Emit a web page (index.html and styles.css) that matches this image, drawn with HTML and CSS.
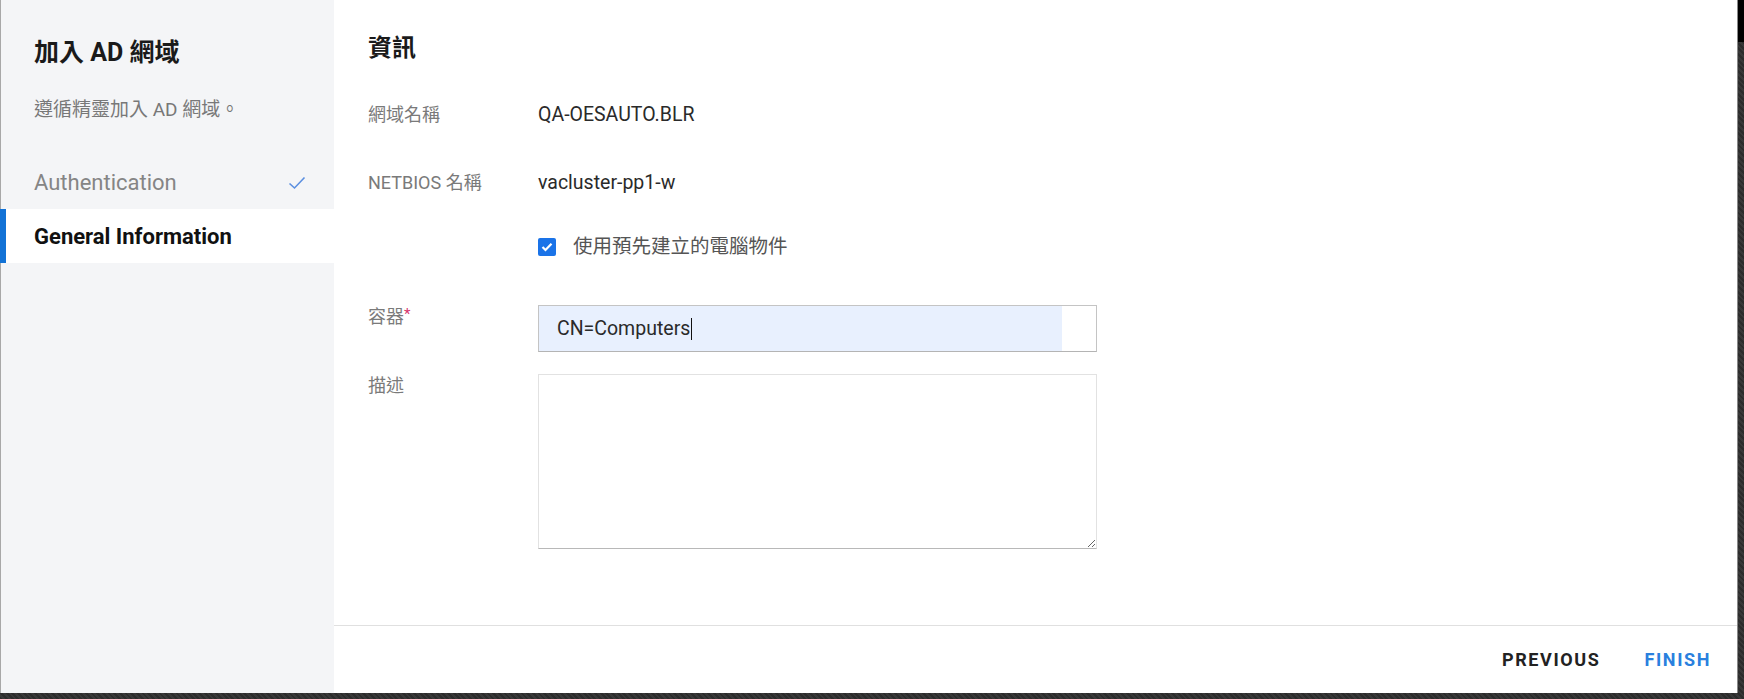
FILE: index.html
```html
<!DOCTYPE html>
<html>
<head>
  <link rel="stylesheet" href="styles.css">
</head>
<body>
  <div class="page">
    <div class="dialog">
      <div class="sidebar">
        <h1 class="wizard-title">加入 AD 網域</h1>
        <p class="wizard-desc">遵循精靈加入 AD 網域。</p>
        <div class="steps">
          <div class="step done">
            <span>Authentication</span>
            <svg class="step-check" width="18" height="14" viewBox="0 0 18 14">
              <path d="M1.5 7.5 L6.5 12 L16.5 1.5" fill="none" stroke="#5b8fe0" stroke-width="1.6"/>
            </svg>
          </div>
          <div class="step active">
            <span>General Information</span>
          </div>
        </div>
      </div>
      <div class="main">
        <div class="content">
          <h2 class="section-title">資訊</h2>
          <div class="field row-domain">
            <span class="label">網域名稱</span>
            <span class="value">QA-OESAUTO.BLR</span>
          </div>
          <div class="field row-netbios">
            <span class="label">NETBIOS 名稱</span>
            <span class="value">vacluster-pp1-w</span>
          </div>
          <div class="field row-check">
            <span class="label"></span>
            <label class="checkbox">
              <span class="check-box">
                <svg width="12" height="10" viewBox="0 0 12 10">
                  <path d="M1.5 5 L4.5 8 L10.5 1.8" fill="none" stroke="#fff" stroke-width="2.2"/>
                </svg>
              </span>
              使用預先建立的電腦物件
            </label>
          </div>
          <div class="field row-container">
            <span class="label">容器<span class="required">*</span></span>
            <div class="input-box">
              <div class="input-fill">CN=Computers<span class="caret"></span></div>
            </div>
          </div>
          <div class="field row-desc">
            <span class="label">描述</span>
            <textarea class="text-area"></textarea>
          </div>
        </div>
        <div class="footer">
          <button class="footer-btn">PREVIOUS</button>
          <button class="footer-btn primary">FINISH</button>
        </div>
      </div>
    </div>
    <div class="edge">
      <div class="edge-top"></div>
    </div>
  </div>
</body>
</html>
```

FILE: styles.css
```css
body {
  margin: 0;
  height: 699px;
  overflow: hidden;
  font-family: Roboto, "Noto Sans CJK TC", sans-serif;
  background: repeating-linear-gradient(45deg, #2c2c2c 0 2px, #383838 2px 4px);
}
.page {
  display: flex;
  height: 693px;
}
.dialog {
  width: 1738px;
  height: 693px;
  display: flex;
  background: #fff;
  border-right: 1px solid #8a8a8a;
  box-sizing: border-box;
}
.edge {
  flex: 1;
}
.edge-top {
  height: 42px;
  background: #000;
}
.sidebar {
  width: 334px;
  box-sizing: border-box;
  background: #f4f5f7;
  border-left: 1px solid #a8a8a8;
  padding-top: 37px;
}
.wizard-title {
  margin: 0 0 0 33px;
  font-size: 25px;
  line-height: 32px;
  font-weight: 700;
  color: #1a1a1a;
}
.wizard-desc {
  margin: 28px 0 0 33px;
  font-size: 19px;
  line-height: 26px;
  color: #787878;
}
.steps {
  margin-top: 32px;
}
.step {
  height: 54px;
  display: flex;
  align-items: center;
  justify-content: space-between;
  padding: 0 28px 0 33px;
  font-size: 22px;
  color: #858585;
}
.step-check {
  margin-top: 2px;
}
.step.active {
  margin-left: -1px;
  padding-left: 28px;
  border-left: 6px solid #1272d6;
  background: #fff;
  color: #111;
  font-weight: 700;
}
.main {
  flex: 1;
  display: flex;
  flex-direction: column;
}
.content {
  flex: 1;
  padding: 32px 0 0 34px;
}
.section-title {
  margin: 0;
  font-size: 24px;
  line-height: 32px;
  font-weight: 700;
  color: #1a1a1a;
}
.field {
  display: grid;
  grid-template-columns: 170px 1fr;
  align-items: start;
  font-size: 18px;
  line-height: 26px;
}
.row-domain {
  margin-top: 38px;
}
.row-netbios {
  margin-top: 42px;
}
.row-check {
  margin-top: 38px;
}
.row-container {
  margin-top: 44px;
}
.row-desc {
  margin-top: 21px;
}
.label {
  color: #7a7a7a;
}
.required {
  color: #d6336c;
  font-size: 15px;
  vertical-align: top;
  line-height: 20px;
}
.value {
  color: #2a2a2a;
  font-size: 19.5px;
}
.checkbox {
  display: flex;
  align-items: center;
  gap: 17px;
  color: #555;
  font-size: 19.5px;
}
.check-box {
  width: 18px;
  height: 18px;
  border-radius: 2px;
  background: #1a73e8;
  display: flex;
  align-items: center;
  justify-content: center;
}
.input-box {
  width: 559px;
  height: 47px;
  box-sizing: border-box;
  border: 1px solid #c4c4c4;
  border-bottom-color: #b4b4b4;
  margin-top: 1px;
  display: flex;
}
.input-fill {
  width: 523px;
  background: #e8f0fe;
  padding-left: 18px;
  box-sizing: border-box;
  display: flex;
  align-items: center;
  font-size: 19.5px;
  color: #2a2a2a;
}
.caret {
  width: 1px;
  height: 22px;
  background: #111;
  margin-left: 1px;
}
.text-area {
  width: 559px;
  height: 175px;
  box-sizing: border-box;
  margin: 1px 0 0;
  border: 1px solid #e2e2e2;
  border-bottom-color: #b8b8b8;
  font-family: Roboto, "Noto Sans CJK TC", sans-serif;
  font-size: 18px;
  padding: 8px 12px;
}
.footer {
  height: 68px;
  border-top: 1px solid #e0e0e0;
  box-sizing: border-box;
  display: flex;
  justify-content: flex-end;
  align-items: center;
  gap: 44px;
  padding-right: 26px;
}
.footer-btn {
  background: none;
  border: none;
  padding: 0;
  cursor: pointer;
  font-family: Roboto, sans-serif;
  font-size: 18px;
  font-weight: 700;
  letter-spacing: 1.6px;
  color: #222;
}
.footer-btn.primary {
  color: #2a80de;
}
```
